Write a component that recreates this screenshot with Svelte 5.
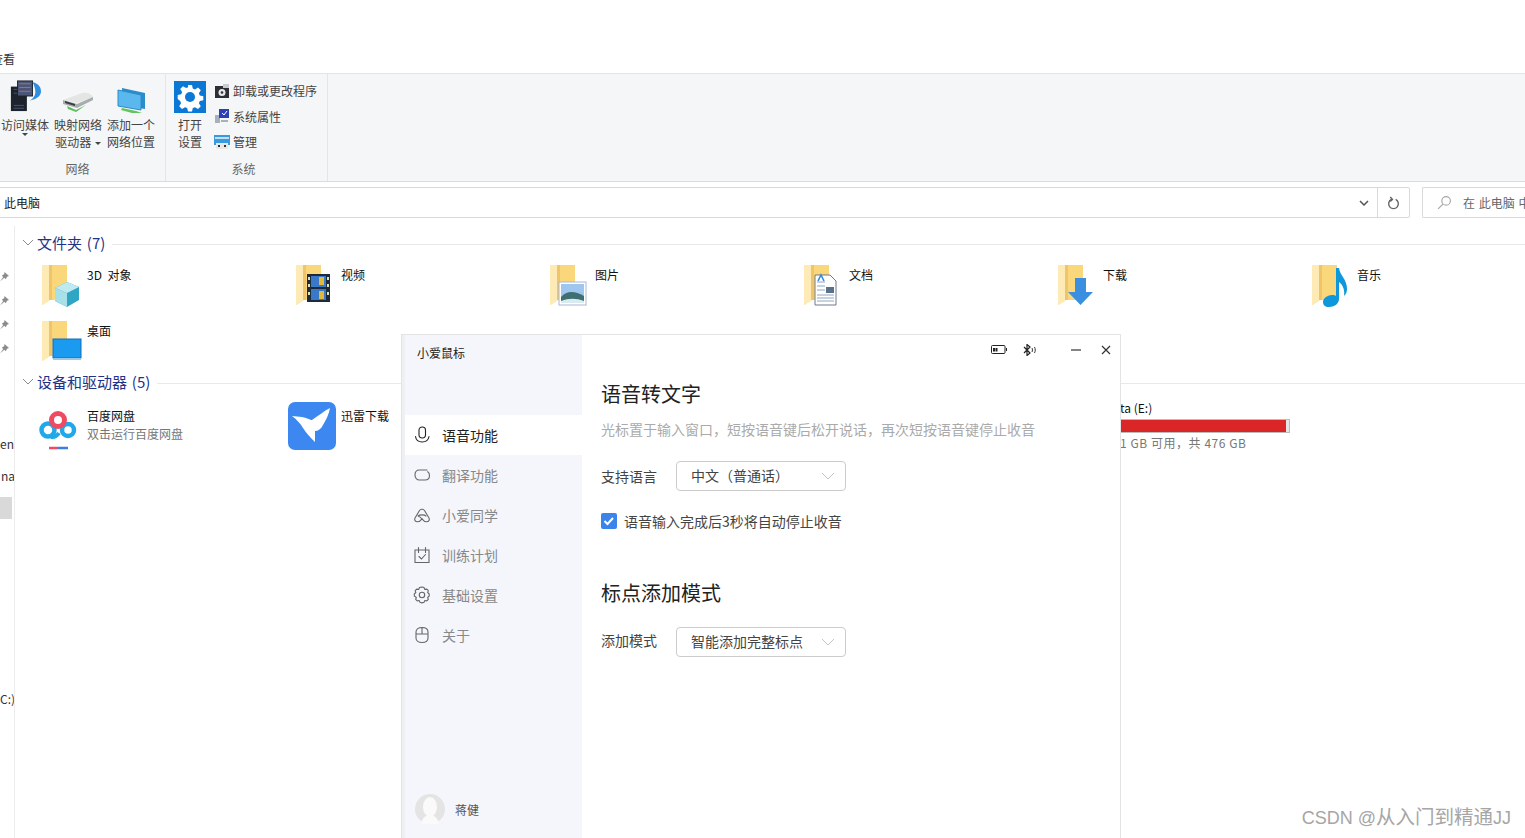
<script>
  // Explorer window in the background, with the mouse settings app floating over it.
  const folders = [
    { name: "3D 对象", badge: "cube" },
    { name: "视频", badge: "film" },
    { name: "图片", badge: "photo" },
    { name: "文档", badge: "doc" },
    { name: "下载", badge: "down" },
    { name: "音乐", badge: "note" },
    { name: "桌面", badge: "desk" }
  ];
  const nav = [
    { name: "语音功能", icon: "mic", active: true },
    { name: "翻译功能", icon: "loop" },
    { name: "小爱同学", icon: "cloud" },
    { name: "训练计划", icon: "plan" },
    { name: "基础设置", icon: "gear" },
    { name: "关于", icon: "mouse" }
  ];
</script>

{#snippet chevron()}
  <svg class="sec-chev" viewBox="0 0 12 7" width="12" height="7" fill="none" stroke="#8a8a8a"><path d="M1 1l5 5 5-5" /></svg>
{/snippet}

{#snippet selectArrow()}
  <svg viewBox="0 0 14 8" width="14" height="8" fill="none" stroke="#c4c4c4"><path d="M1 1l6 6 6-6" /></svg>
{/snippet}

{#snippet folder(badge)}
  <svg class="folder" viewBox="0 0 44 44" width="44" height="44">
    <path d="M1 1h25v35H9l-8 5z" fill="#fbd77c" />
    <path d="M1 1h7v36l-7 4z" fill="#fdeab4" />
    <path d="M8 1h3v35H8z" fill="#f0c468" />
    {#if badge === "cube"}
      <path d="M14 24l12-6 12 5v13l-12 7-12-6z" fill="#2ea6c4" />
      <path d="M14 24l12-6 12 5-12 6z" fill="#bfeaf0" />
      <path d="M14 24l12 5v14l-12-6z" fill="#a8e0ea" />
    {:else if badge === "film"}
      <rect x="12" y="10" width="23" height="28" fill="#1d2a3a" />
      <rect x="16" y="12" width="15" height="11" fill="#3a78c8" />
      <rect x="16" y="25" width="15" height="11" fill="#3a78c8" />
      <path d="M24 13h5v8h-5zM24 27h5v8h-5z" fill="#e2b93a" />
      <path d="M13 13h2v3h-2zM13 20h2v3h-2zM13 28h2v3h-2zM32 13h2v3h-2zM32 20h2v3h-2zM32 28h2v3h-2z" fill="#d8e6c0" />
    {:else if badge === "photo"}
      <rect x="10" y="18" width="27" height="23" fill="#fff" stroke="#a8b8d8" />
      <rect x="12" y="20" width="23" height="19" fill="#9fc6ee" />
      <path d="M12 33c6-7 14-6 23-1v7H12z" fill="#3f6f70" />
      <path d="M12 37c8-3 15-3 23 0v2H12z" fill="#d8ecf0" />
    {:else if badge === "doc"}
      <path d="M12 11h15l6 6v24H12z" fill="#fff" stroke="#70788a" />
      <path d="M14 18h8M14 31h17M14 34h17M14 37h17" stroke="#8ea4c4" />
      <path d="M15 17l3-6 3 6" fill="none" stroke="#2e8ae6" stroke-width="1.6" />
      <rect x="23" y="23" width="8" height="6" fill="#5a7088" />
      <path d="M14 22h8M14 26h8" stroke="#8ea4c4" />
    {:else if badge === "down"}
      <path d="M18 14h11v14h7L23.500 41 11 28h7z" fill="#3a8fe0" />
    {:else if badge === "note"}
      <path d="M25 4l3 0c1 8 8 11 8 21 0 3-1 5-3 7 1-6-1-11-5-14v17c0 5-5 8-10 8-4 0-6-2-6-5 0-4 5-7 9-7 2 0 3 0 4 1z" fill="#0f97dc" />
    {:else}
      <rect x="12" y="19" width="28" height="19" fill="#1b9bef" stroke="#0f6fb8" />
      <path d="M12 38h28v2H12z" fill="#9cc8e8" />
    {/if}
  </svg>
{/snippet}

{#snippet navIcon(name)}
  <svg viewBox="0 0 18 18" width="18" height="18" fill="none" stroke="currentColor" stroke-width="1.1" stroke-linecap="round">
    {#if name === "mic"}
      <rect x="6" y="1" width="6.500" height="11" rx="3.200" />
      <path d="M2.500 10.500c.5 3.500 3.300 5.500 6.700 5.500s6.200-2 6.800-5.500" />
    {:else if name === "loop"}
      <path d="M14 4H6.500C3.800 4 2 6 2 9s1.800 5 4.500 5H12c2.500 0 4.500-1.800 4.500-4.500 0-1.700-.6-3-1.800-3.800" />
    {:else if name === "cloud"}
      <path d="M6.500 4.500C7.500 2.800 10.500 2.800 11.500 4.500L16 12c1 2-.3 3.800-2.500 3.800-1.700 0-3-1-4.500-3-1.500 2-2.800 3-4.500 3C2.300 15.800 1 14 2 12z" />
      <path d="M5 10c1.500-1.500 6.500-1.500 8 0M9 13c-1-1.500-2-2.500-4-3" />
    {:else if name === "plan"}
      <path d="M2 4h14v12.500H2zM5.500 1.500v5M12.500 1.500v5" />
      <path d="M6 10.500l2.500 2.500 4-4.500" />
    {:else if name === "gear"}
      <path d="M9 1.500l2 .5.800 1.900 2-.3 1.500 1.500-.6 1.900 1.500 1.500v2l-1.500 1.500.6 1.800-1.500 1.500-2-.3-.8 1.900-2 .5-2-.5-.8-1.900-2 .3-1.500-1.500.6-1.800L1.300 10.500v-2l1.500-1.500-.6-1.900 1.500-1.500 2 .3.800-1.900z" transform="translate(0 -.5)" />
      <circle cx="9" cy="9" r="2.700" />
    {:else}
      <path d="M3 6c0-3 2.500-4.500 6-4.500S15 3 15 6v6c0 3-2.500 4.500-6 4.500S3 15 3 12zM3 8h12M9 1.500V8" />
    {/if}
  </svg>
{/snippet}

<div class="page">
  <div class="titlebar"><span class="tab">查看</span></div>

  <div class="ribbon">
    <div class="group net">
      <div class="tools">
        <div class="tool media">
          <svg viewBox="0 0 36 34" width="34" height="32">
            <rect x="3" y="7" width="17" height="26" fill="#1d222c" />
            <path d="M6 10h11M6 14h11M6 27h11M6 30h11" stroke="#46587a" />
            <rect x="10" y="1" width="16" height="16" fill="#4a5678" stroke="#1d222c" />
            <path d="M12 4h12M12 8h12M12 12h12" stroke="#b86a78" />
            <path d="M26 2c7 2 9 6 9 10s-3 8-12 10c3-2 6-5 6-9s-1-7-3-11z" fill="#2e8fe0" />
          </svg>
          <span>访问媒体</span>
          <i class="caret"></i>
        </div>
        <div class="tool map">
          <svg viewBox="0 0 34 26" width="34" height="26">
            <path d="M2 13L21 6c5-1 9 0 11 4l-16 6z" fill="#e4e6e4" />
            <path d="M2 13l14 4 16-7v3L16 21 2 17z" fill="#a8acae" />
            <path d="M4 14l10 3v2L4 16z" fill="#3a3e42" />
            <path d="M6 19l9 4 10-5-10 7-8-3z" fill="#5cc05a" />
          </svg>
          <span>映射网络</span>
          <span>驱动器 <i class="caret inline"></i></span>
        </div>
        <div class="tool add">
          <svg viewBox="0 0 32 30" width="32" height="30">
            <path d="M7 3l23 5v16L7 20z" fill="#2a8cc8" />
            <path d="M3 5l23 5v15L3 21z" fill="#5ab8ee" stroke="#2a8cc8" />
            <path d="M7 23l14 3 6 2-10 0-11-3z" fill="#62c45c" />
          </svg>
          <span>添加一个</span>
          <span>网络位置</span>
        </div>
      </div>
      <div class="group-label">网络</div>
    </div>

    <div class="group sys">
      <div class="tools">
        <div class="tool settings">
          <svg viewBox="0 0 32 32" width="32" height="32">
            <rect width="32" height="32" fill="#0a78d4" />
            <path d="M14 4h4l.8 3.500 2.200.9 3-1.900 2.800 2.800-1.900 3 .9 2.200 3.500.8v4l-3.500.8-.9 2.200 1.900 3-2.800 2.800-3-1.900-2.200.9-.8 3.500h-4l-.8-3.500-2.200-.9-3 1.900-2.800-2.800 1.900-3-.9-2.200L3.700 18v-4l3.500-.8.9-2.200-1.900-3L9 5.200l3 1.900 2.200-.9z" fill="#fff" />
            <circle cx="16" cy="16" r="5" fill="#0a78d4" />
          </svg>
          <span>打开</span>
          <span>设置</span>
        </div>
        <div class="small-tools">
          <div class="small">
            <svg viewBox="0 0 16 16" width="16" height="16">
              <rect x="1" y="3" width="14" height="12" fill="#2c2f33" />
              <rect x="9" y="1" width="6" height="4" fill="#c8ccd0" />
              <circle cx="8" cy="9.500" r="3.500" fill="#e8e8e8" />
              <circle cx="8" cy="9.500" r="1.300" fill="#2c2f33" />
            </svg>
            <span>卸载或更改程序</span>
          </div>
          <div class="small">
            <svg viewBox="0 0 16 16" width="16" height="16">
              <rect x="1" y="7" width="5" height="8" fill="#a8b0ba" />
              <rect x="5" y="1" width="10" height="9" fill="#2d3fb4" />
              <path d="M8 5l2 2 3-4" fill="none" stroke="#fff" />
              <path d="M7 12h7v2H7z" fill="#a8b0ba" />
            </svg>
            <span>系统属性</span>
          </div>
          <div class="small">
            <svg viewBox="0 0 16 16" width="16" height="16">
              <rect x="0" y="1" width="16" height="10" fill="#3a9ae0" />
              <rect x="1" y="3" width="14" height="2" fill="#bfe0f6" />
              <rect x="2" y="9" width="12" height="6" fill="#e8e8e8" />
              <path d="M4 11h2v2H4zM10 11h2v2h-2z" fill="#2c2f33" />
            </svg>
            <span>管理</span>
          </div>
        </div>
      </div>
      <div class="group-label">系统</div>
    </div>
  </div>

  <div class="addressbar">
    <div class="address">
      <span class="path">此电脑</span>
      <svg class="addr-chev" viewBox="0 0 10 6" width="10" height="6" fill="none" stroke="#555" stroke-width="1.500"><path d="M1 1l4 4 4-4" /></svg>
      <span class="refresh">
        <svg viewBox="0 0 12 13" width="13" height="14" fill="none" stroke="#666" stroke-width="1.300"><path d="M4 3.200a4.500 4.500 0 1 0 4 0M3 1l2 2.200L3 5" /></svg>
      </span>
    </div>
    <div class="search">
      <svg viewBox="0 0 14 14" width="15" height="15" fill="none" stroke="#a8a8a8" stroke-width="1.100"><circle cx="8.500" cy="5.500" r="4" /><path d="M5.500 8.500L1 13" /></svg>
      <span>在 此电脑 中</span>
    </div>
  </div>

  <div class="body">
    <aside class="tree">
      <div class="pins">
        {#each [0, 1, 2, 3] as p (p)}
          <svg viewBox="0 0 10 10" width="10" height="10"><path d="M5.500 0l4.500 4-2 .8-1.200 2.400-1.500-1.500L1 9.500 4.200 5 2.800 3.500l2.400-1.200z" fill="#8c8c8c" /></svg>
        {/each}
      </div>
      <span class="cut en">en</span>
      <span class="cut na">na</span>
      <div class="cut-sel"></div>
      <span class="cut drive-c">C:)</span>
    </aside>

    <main class="files">
      <div class="sec-head">
        {@render chevron()}
        <span class="sec-title">文件夹 (7)</span>
        <span class="sec-line"></span>
      </div>
      <div class="folders">
        {#each folders as f (f.name)}
          <div class="folder-item">
            {@render folder(f.badge)}
            <span>{f.name}</span>
          </div>
        {/each}
      </div>

      <div class="sec-head second">
        {@render chevron()}
        <span class="sec-title">设备和驱动器 (5)</span>
        <span class="sec-line"></span>
      </div>
      <div class="devices">
        <div class="device baidu">
          <svg viewBox="0 0 48 48" width="48" height="48">
            <circle cx="13" cy="28" r="6.500" fill="none" stroke="#1fa8ea" stroke-width="4.500" />
            <circle cx="33" cy="28" r="6" fill="none" stroke="#1fa8ea" stroke-width="4.500" />
            <circle cx="23" cy="18" r="6.500" fill="none" stroke="#ef4a62" stroke-width="5" />
            <path d="M16 35c3 .5 6-1 8-4" fill="none" stroke="#1fa8ea" stroke-width="4" />
            <path d="M14 46h9" stroke="#ef4a62" stroke-width="2.500" />
            <path d="M23 46h10" stroke="#3a7fe0" stroke-width="2.500" />
          </svg>
          <div>
            <div>百度网盘</div>
            <div class="sub">双击运行百度网盘</div>
          </div>
        </div>
        <div class="device xunlei">
          <svg viewBox="0 0 48 48" width="48" height="48">
            <rect width="48" height="48" rx="7" fill="#3d87f0" />
            <path d="M4 14l10 1c6 1 8 3 10 3 6-4 12-9 18-12-1 6-4 12-7 17-2 4-5 6-8 6v11c-5-5-9-9-12-14-3-5-6-8-11-12z" fill="#fff" />
          </svg>
          <div>迅雷下载</div>
        </div>
        <div class="device drive">
          <div class="drive-name">ta (E:)</div>
          <div class="meter"><div class="meter-used" style="width: 98%"></div></div>
          <div class="sub">1 GB 可用，共 476 GB</div>
        </div>
      </div>
    </main>
  </div>

  <section class="app">
    <nav class="side">
      <div class="brand">小爱鼠标</div>
      <div class="nav-list">
        {#each nav as n (n.name)}
          <div class="nav-item" class:active={n.active}>
            {@render navIcon(n.icon)}
            <span>{n.name}</span>
          </div>
        {/each}
      </div>
      <div class="user">
        <svg viewBox="0 0 30 30" width="30" height="30">
          <circle cx="15" cy="15" r="15" fill="#e4e4e4" />
          <ellipse cx="15" cy="13" rx="7" ry="10" fill="#fafafa" />
          <path d="M6 30c1-6 5-9 9-9s8 3 9 9z" fill="#fafafa" />
        </svg>
        <span>蒋健</span>
      </div>
    </nav>

    <div class="content">
      <div class="win-controls">
        <svg class="battery" viewBox="0 0 16 10" width="16" height="10" fill="none" stroke="#222"><rect x=".5" y=".5" width="13.500" height="8" rx="1" /><path d="M3 3v3.500M5.500 3v3.500" stroke-width="2" /><path d="M15.500 3v3" /></svg>
        <svg class="bt" viewBox="0 0 15 12" width="15" height="12" fill="none" stroke="#222" stroke-width="1.200"><path d="M2 3l6 6-3 2.500V.5L8 3 2 9" /><path d="M10 4c.6 1.200.6 2.800 0 4M12.500 3c1 2 1 4 0 6" stroke-width=".9" /></svg>
        <svg class="min" viewBox="0 0 10 2" width="10" height="2"><path d="M0 1h10" stroke="#333" stroke-width="1.200" /></svg>
        <svg class="close" viewBox="0 0 10 10" width="10" height="10" fill="none" stroke="#333" stroke-width="1.200"><path d="M1 1l8 8M9 1l-8 8" /></svg>
      </div>

      <h2>语音转文字</h2>
      <p class="desc">光标置于输入窗口，短按语音键后松开说话，再次短按语音键停止收音</p>
      <div class="field">
        <label for="lang">支持语言</label>
        <div class="select" id="lang"><span>中文（普通话）</span>{@render selectArrow()}</div>
      </div>
      <div class="check-row">
        <span class="check">
          <svg viewBox="0 0 16 16" width="16" height="16" fill="none" stroke="#fff" stroke-width="2"><path d="M3.500 8l3 3 5.500-6" /></svg>
        </span>
        <span>语音输入完成后3秒将自动停止收音</span>
      </div>

      <h2 class="punct">标点添加模式</h2>
      <div class="field mode">
        <label for="mode">添加模式</label>
        <div class="select" id="mode"><span>智能添加完整标点</span>{@render selectArrow()}</div>
      </div>
    </div>
  </section>

  <div class="watermark">CSDN @<span class="wm-cjk">从入门到精通</span>JJ</div>
</div>

<style>
  :global(body) { margin: 0; background: #fff; }
  .page { position: relative; width: 1525px; height: 838px; overflow: hidden; background: #fff; color: #1a1a1a; font-family: "Noto Sans CJK SC", "Liberation Sans", sans-serif; font-size: 12px; line-height: 17px; }

  .titlebar { height: 74px; box-sizing: border-box; padding-top: 50px; border-bottom: 1px solid #e3e4e6; }
  .tab { display: block; margin-left: -9px; color: #333; }

  .ribbon { display: flex; height: 108px; box-sizing: border-box; background: #f5f6f7; border-bottom: 1px solid #dadbdc; }
  .group { display: flex; flex-direction: column; box-sizing: border-box; border-right: 1px solid #e4e5e7; }
  .group.net { width: 166px; padding-right: 10px; }
  .group.sys { width: 162px; padding-left: 8px; padding-right: 14px; }
  .tools { display: flex; height: 81px; }
  .group-label { text-align: center; color: #666; line-height: 18px; margin-top: 5px; }
  .tool { display: flex; flex-direction: column; align-items: center; color: #444; white-space: nowrap; flex: none; }
  .tool svg { flex: none; }
  .tool.media { width: 50px; padding-top: 6px; margin-right: 3px; }
  .tool.media svg { margin-bottom: 4px; }
  .tool.map { width: 50px; padding-top: 13px; margin-right: 3px; }
  .tool.map svg { margin-bottom: 3px; }
  .tool.add { width: 50px; padding-top: 11px; }
  .tool.add svg { margin-bottom: 1px; }
  .tool.settings { width: 32px; padding-top: 7px; }
  .tool.settings svg { margin-bottom: 3px; }
  .caret { display: block; width: 0; height: 0; border: 3px solid transparent; border-top: 3px solid #444; border-bottom: 0; margin-top: 0; }
  .caret.inline { display: inline-block; vertical-align: middle; margin-left: 1px; }

  .small-tools { display: flex; flex-direction: column; margin-left: 8px; padding-top: 8px; gap: 8.500px; }
  .small { display: flex; align-items: center; gap: 3px; height: 17px; color: #444; white-space: nowrap; }

  .addressbar { display: flex; height: 44px; box-sizing: border-box; padding-top: 5px; gap: 12px; }
  .address { display: flex; align-items: center; flex: none; width: 1411px; height: 31px; margin-left: -1px; box-sizing: border-box; border: 1px solid #d9d9d9; border-radius: 0 2px 2px 0; padding-left: 4px; }
  .path { flex: 1; color: #222; }
  .addr-chev { margin-right: 8px; }
  .refresh { display: flex; align-items: center; justify-content: center; width: 31px; height: 100%; border-left: 1px solid #d9d9d9; }
  .search { display: flex; align-items: center; flex: 1; min-width: 0; height: 31px; box-sizing: border-box; border: 1px solid #d9d9d9; border-right: 0; border-radius: 2px 0 0 2px; padding-left: 14px; gap: 11px; color: #666; white-space: nowrap; word-spacing: 1px; overflow: hidden; }
  .search svg { flex: none; }

  .body { display: flex; height: 612px; }
  .tree { position: relative; width: 14px; flex: none; border-right: 1px solid #ececec; overflow: hidden; }
  .pins { display: flex; flex-direction: column; gap: 14px; margin: 46px 0 0 -1px; }
  .pins svg { display: block; }
  .cut { display: block; color: #333; white-space: nowrap; }
  .cut.en { margin-top: 81px; margin-left: 0; }
  .cut.na { margin-top: 15px; margin-left: 1px; }
  .cut-sel { width: 12px; height: 22px; margin-top: 13px; background: #d9d9d9; }
  .cut.drive-c { margin-top: 171px; }

  .files { flex: 1; min-width: 0; }
  .sec-head { display: flex; align-items: center; height: 20px; margin-top: 6px; padding-left: 7px; }
  .sec-head.second { margin-top: 0; }
  .sec-chev { margin-right: 3px; }
  .sec-title { font-size: 15px; color: #1e3287; margin-right: 7px; white-space: nowrap; word-spacing: 1.500px; }
  .sec-line { flex: 1; height: 1px; margin-top: 4px; background: #e8e9ea; }

  .folders { display: grid; grid-template-columns: repeat(6, 254px); grid-auto-rows: 56px; padding: 10px 0 0 26px; height: 119px; box-sizing: border-box; }
  .folder-item { display: flex; gap: 0; padding-top: 4px; }
  .folder { flex: none; margin: -2px 2px 0 0; }
  .folder-item span { color: #111; white-space: nowrap; word-spacing: 3px; }

  .devices { display: grid; grid-template-columns: repeat(5, 253px) 1fr; padding: 12px 0 0 20px; }
  .device { display: flex; gap: 4px; height: 50px; color: #111; white-space: nowrap; }
  .device > div { padding-top: 4px; }
  .device svg { flex: none; margin-top: -1px; }
  .xunlei svg { margin-right: 1px; }
  .sub { color: #777; margin-top: 1px; }
  .device.drive { grid-column: 5; display: block; padding-left: 73px; margin-top: -7px; }
  .drive-name { color: #111; line-height: 16px; }
  .device.drive > .meter { width: 170px; height: 14px; box-sizing: border-box; padding-top: 0; border: 1px solid #bcbcbc; border-left: 0; background: #e6e6e6; margin-top: 3px; }
  .meter-used { height: 100%; background: #da2626; }
  .device.drive .sub { margin-top: -3px; line-height: 18px; letter-spacing: 0.55px; }

  /* floating app window */
  .app { position: absolute; left: 401px; top: 334px; display: flex; width: 720px; height: 504px; box-sizing: border-box; border: 1px solid #e4e4e4; border-bottom: 0; background: #fff; }
  .side { display: flex; flex-direction: column; width: 180px; flex: none; box-sizing: border-box; background: #f4f6fc; border-left: 3px solid #eef0f4; }
  .brand { height: 80px; box-sizing: border-box; padding: 9px 0 0 12px; color: #222; }
  .nav-item { display: flex; align-items: center; height: 40px; box-sizing: border-box; padding-left: 8px; gap: 11px; color: #888; font-size: 14px; }
  .nav-item svg { color: #666; }
  .nav-item.active { background: #fff; color: #222; }
  .nav-item.active svg { color: #222; }
  .user { display: flex; align-items: center; gap: 10px; margin-top: auto; margin-bottom: 14px; padding-left: 10px; color: #555; }

  .content { flex: 1; padding-left: 19px; min-width: 0; font-size: 14px; }
  .win-controls { display: flex; align-items: center; height: 30px; padding-left: 390px; }
  .bt { margin-left: 15px; }
  .min { margin-left: 34px; }
  .close { margin-left: 20px; }
  h2 { margin: 15px 0 0; font-size: 20px; font-weight: 400; line-height: 28px; color: #222; }
  .desc { margin: 11px 0 0; color: #aaa; line-height: 20px; white-space: nowrap; }
  .field { display: flex; align-items: center; margin-top: 22px; color: #444; }
  .field label { width: 75px; }
  .select { display: flex; align-items: center; justify-content: space-between; width: 170px; height: 30px; box-sizing: border-box; border: 1px solid #ccc; border-radius: 4px; padding: 0 10px 0 14px; color: #444; background: #fff; }
  .select span { margin-top: -2px; }
  .check-row { display: flex; align-items: center; gap: 7px; margin-top: 20px; color: #444; line-height: 20px; }
  .check { display: block; width: 16px; height: 16px; background: #3a84ec; border-radius: 2px; }
  .check svg { display: block; }
  h2.punct { margin-top: 48px; }
  .field.mode { margin-top: 20px; }
  .field.mode label { margin-top: -4px; }

  .watermark { position: absolute; right: 14px; bottom: 8px; font-family: "Liberation Sans", "Noto Sans CJK SC", sans-serif; font-size: 18px; line-height: 24px; color: #a6a6a6; white-space: nowrap; }
  .wm-cjk { font-size: 19.500px; }
</style>
